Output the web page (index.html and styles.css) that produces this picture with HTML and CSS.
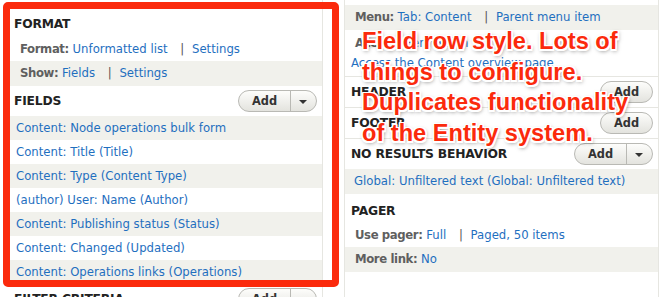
FILE: index.html
```html
<!DOCTYPE html>
<html lang="en">
<head>
    <meta charset="utf-8">
    <title>Views UI - Field row style</title>
    <link rel="stylesheet" href="styles.css">
</head>
<body>
    <div class="views-columns">
        <div class="views-column left-column">
            <div class="display-section">
                <div class="section-header"><h3>Format</h3></div>
                <div class="setting-row">
                    <span class="label">Format:</span> <a href="#">Unformatted list</a>
                    <span class="sep">|</span> <a href="#">Settings</a>
                </div>
                <div class="setting-row even">
                    <span class="label">Show:</span> <a href="#">Fields</a>
                    <span class="sep">|</span> <a href="#">Settings</a>
                </div>
            </div>
            <div class="display-section">
                <div class="section-header">
                    <h3>Fields</h3>
                    <div class="add-button dropbutton"><span class="btn-main">Add</span><span class="btn-toggle"></span></div>
                </div>
                <div class="field-row even"><a href="#">Content: Node operations bulk form</a></div>
                <div class="field-row"><a href="#">Content: Title (Title)</a></div>
                <div class="field-row even"><a href="#">Content: Type (Content Type)</a></div>
                <div class="field-row"><a href="#">(author) User: Name (Author)</a></div>
                <div class="field-row even"><a href="#">Content: Publishing status (Status)</a></div>
                <div class="field-row"><a href="#">Content: Changed (Updated)</a></div>
                <div class="field-row even"><a href="#">Content: Operations links (Operations)</a></div>
            </div>
            <div class="display-section">
                <div class="section-header">
                    <h3>Filter criteria</h3>
                    <div class="add-button dropbutton"><span class="btn-main">Add</span><span class="btn-toggle"></span></div>
                </div>
            </div>
        </div>

        <div class="views-column right-column">
            <div class="display-section top-section">
                <div class="setting-row even">
                    <span class="label">Menu:</span> <a href="#">Tab: Content</a>
                    <span class="sep">|</span> <a href="#">Parent menu item</a>
                </div>
                <div class="setting-row access-row">
                    <span class="label">Access:</span> <a href="#">Permission</a>
                    <span class="sep">|</span>
                    <a href="#" class="wrapped-link">Access the Content overview page</a>
                </div>
            </div>
            <div class="display-section bordered">
                <div class="section-header">
                    <h3>Header</h3>
                    <div class="add-button"><span class="btn-main">Add</span></div>
                </div>
            </div>
            <div class="display-section bordered">
                <div class="section-header">
                    <h3>Footer</h3>
                    <div class="add-button"><span class="btn-main">Add</span></div>
                </div>
            </div>
            <div class="display-section bordered">
                <div class="section-header">
                    <h3>No results behavior</h3>
                    <div class="add-button dropbutton"><span class="btn-main">Add</span><span class="btn-toggle"></span></div>
                </div>
                <div class="field-row even"><a href="#">Global: Unfiltered text (Global: Unfiltered text)</a></div>
            </div>
            <div class="display-section">
                <div class="section-header pager-header"><h3>Pager</h3></div>
                <div class="setting-row">
                    <span class="label">Use pager:</span> <a href="#">Full</a>
                    <span class="sep">|</span> <a href="#">Paged, 50 items</a>
                </div>
                <div class="setting-row even">
                    <span class="label">More link:</span> <a href="#">No</a>
                </div>
            </div>
        </div>
    </div>

    <div class="callout-box"></div>
    <p class="callout-text">Field row style. Lots of<br>things to configure.<br>Duplicates functionality<br>of the Entity system.</p>
</body>
</html>
```

FILE: styles.css
```css
:root {
    --link-color: #1f6fbf;
    --row-gray: #f1f1ec;
    --line-color: #e6e6e1;
    --label-color: #5f5f5f;
    --title-color: #222;
    --callout-red: #fb2a0c;
}

* {
    box-sizing: border-box;
    margin: 0;
    padding: 0;
}

body {
    font-family: 'DejaVu Sans', sans-serif;
    font-size: 11.7px;
    color: #333;
    background-color: white;
    overflow: hidden;
    height: 297px;
}

a {
    color: var(--link-color);
    text-decoration: none;
}

.views-columns {
    display: flex;
    gap: 21px;
    padding-left: 10px;
}

.views-column {
    border-right: 1px solid var(--line-color);
}

.left-column {
    width: 313px;
    padding-top: 10px;
}

.right-column {
    width: 315px;
    border-left: 1px solid var(--line-color);
    padding-top: 5px;
}

.section-header {
    display: flex;
    align-items: center;
    justify-content: space-between;
    height: 30px;
    padding: 0 5px 0 4px;
}

.left-column .display-section:first-child .section-header {
    height: 27px;
}

h3 {
    font-size: 12.3px;
    font-weight: bold;
    text-transform: uppercase;
    color: var(--title-color);
    letter-spacing: -0.2px;
}

.setting-row {
    height: 24px;
    line-height: 24px;
    padding-left: 10px;
    white-space: nowrap;
}

.setting-row.even {
    background-color: var(--row-gray);
    height: 25px;
    line-height: 25px;
}

.label {
    font-weight: bold;
    color: var(--label-color);
    letter-spacing: -0.4px;
}

.sep {
    color: #555;
    margin: 0 4px 0 9px;
}

.access-row {
    height: 46px;
    line-height: 20px;
    padding: 3px 6px 0 10px;
}

.wrapped-link {
    display: block;
    margin-left: -4px;
}

.field-row {
    height: 24px;
    line-height: 24px;
    padding-left: 6px;
    white-space: nowrap;
}

.field-row.even {
    background-color: var(--row-gray);
}

.right-column .field-row {
    height: 25px;
    line-height: 25px;
    padding-left: 9px;
}

.bordered {
    border-top: 1px solid var(--line-color);
}

.pager-header {
    height: 29px;
    padding-top: 4px;
}

.right-column .section-header {
    padding-left: 6px;
}

.add-button {
    display: flex;
    height: 22px;
    border: 1px solid #b9b9b4;
    border-radius: 11px;
    background: linear-gradient(#fdfdfb, #e3e3de);
    font-weight: bold;
    font-size: 11.4px;
    color: #333;
    overflow: hidden;
}

.btn-main {
    width: 51px;
    text-align: center;
    line-height: 20px;
}

.btn-toggle {
    width: 26px;
    border-left: 1px solid #b9b9b4;
    position: relative;
}

.btn-toggle::after {
    content: '';
    position: absolute;
    left: 8px;
    top: 9px;
    border-left: 4px solid transparent;
    border-right: 4px solid transparent;
    border-top: 4px solid #333;
}

.callout-box {
    position: absolute;
    left: 3px;
    top: 2px;
    width: 336px;
    height: 285px;
    border: 7px solid var(--callout-red);
    border-radius: 5px;
}

.callout-text {
    position: absolute;
    left: 362px;
    top: 26px;
    font-family: 'Liberation Sans', Arial, sans-serif;
    font-weight: bold;
    font-size: 23.6px;
    line-height: 30.7px;
    color: var(--callout-red);
    white-space: nowrap;
    text-shadow:
        -1.5px -1.5px 0 #fff, 1.5px -1.5px 0 #fff,
        -1.5px 1.5px 0 #fff, 1.5px 1.5px 0 #fff,
        0 1.5px 0 #fff, 0 -1.5px 0 #fff,
        1.5px 0 0 #fff, -1.5px 0 0 #fff,
        1px 2px 4px rgba(0, 0, 0, 0.6);
}
```
